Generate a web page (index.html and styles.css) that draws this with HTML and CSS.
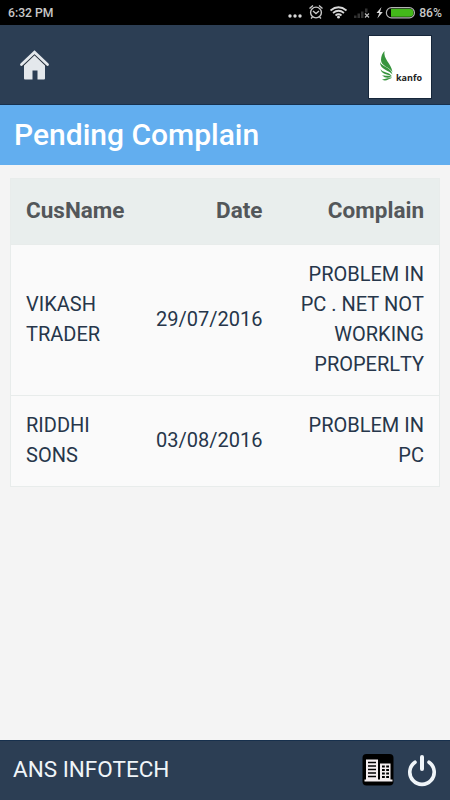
FILE: index.html
```html
<!DOCTYPE html>
<html lang="en">
  <head>
    <meta charset="UTF-8" />
    <meta name="viewport" content="width=device-width, initial-scale=1" />
    <title>Pending Complain</title>
    <link rel="stylesheet" href="styles.css">
  </head>
  <body>
    <!-- Status bar -->
    <div class="status-bar">
      <span class="time">6:32 PM</span>
      <svg class="status-icons" width="130" height="25" viewBox="0 0 130 25">
        <g fill="#d8d8d8">
          <circle cx="5" cy="16" r="1.7" />
          <circle cx="10" cy="16" r="1.7" />
          <circle cx="15" cy="16" r="1.7" />
        </g>
        <!-- Alarm -->
        <g fill="none" stroke="#c8c8c8" stroke-width="1.4">
          <circle cx="31" cy="12.5" r="5.4" />
          <path d="M28 11l3 2.5 3-2.5M24.500 8.500l3.500-3M37.500 8.500l-3.500-3M27.500 17l-1.500 1.500M34.500 17l1.500 1.500" />
        </g>
        <!-- Wifi -->
        <g fill="none" stroke="#d8d8d8" stroke-width="1.7">
          <path d="M45.500 10.500q8-6.500 16 0M48 13q5.500-4.500 11 0M50.500 15.500q3-2.500 6 0" />
        </g>
        <circle cx="53.500" cy="17.200" r="1.400" fill="#d8d8d8" />
        <!-- Signal -->
        <path d="M69 15.500h2.500V18H69zM72.500 13.500H75V18h-2.500zM76 11.500h2.500V18H76zM80 8.500h2.500v4H80z" fill="#333" />
        <path d="M80 13.500l4 4M84 13.500l-4 4" stroke="#bbb" stroke-width="1.200" />
        <!-- Battery -->
        <path d="M96.500 7l-5 6h2.800l-2 5.500 5.500-6.500h-2.800z" fill="#d8d8d8" />
        <rect x="101.400" y="7.600" width="28" height="10.300" rx="5" fill="#000" stroke="#b4b4b4" stroke-width="1.200" />
        <path d="M106 8.800h18.500a4 4 0 0 1 0 8H106z" fill="#43b81a" />
      </svg>
      <span class="battery">86%</span>
    </div>

    <!-- Header -->
    <header>
      <svg class="home" width="32" height="32" viewBox="0 0 32 32">
        <path d="M5 15L15.500 5 26 15v14.500a1 1 0 0 1-1 1h-6.500v-9h-5v9H6a1 1 0 0 1-1-1z" fill="#e4e8ec" />
        <path d="M3 17L15.500 5 28 17" fill="none" stroke="#26303c" stroke-width="2" />
        <path d="M2.500 15.500L15.500 3.200 28.500 15.500" fill="none" stroke="#e4e8ec" stroke-width="2.800" stroke-linecap="round" />
      </svg>
      <div class="logo">
        <svg width="17" height="34" viewBox="0 0 17 34">
          <g fill="#36943c">
            <path d="M5.500 1C4 9 12 13 13.500 22C10 17 2 16 2 10C2 6 3.500 3 5.500 1z" />
            <path d="M1 12c2 5 11 5 12.500 12.500C10 20 1 20 1 12z" />
            <path d="M1.500 19c2 4 9 2.500 11.500 7.500C9 24 2.500 25 1.500 19z" />
            <path d="M3 25c3 1.500 7-.5 10 2.500-3-.3-7 1.500-10-2.500z" />
            <path d="M3 29.500c3 0 5-2 9.500-1.300C9 29 7 32 3 29.500z" />
          </g>
        </svg>
        <span>kanfo</span>
      </div>
    </header>

    <h1>Pending Complain</h1>

    <!-- Complaints -->
    <main>
      <table>
        <thead>
          <tr>
            <th>CusName</th>
            <th>Date</th>
            <th>Complain</th>
          </tr>
        </thead>
        <tbody>
          <tr>
            <td>VIKASH TRADER</td>
            <td>29/07/2016</td>
            <td>PROBLEM IN PC . NET NOT WORKING PROPERLTY</td>
          </tr>
          <tr>
            <td>RIDDHI SONS</td>
            <td>03/08/2016</td>
            <td>PROBLEM IN PC</td>
          </tr>
        </tbody>
      </table>
    </main>

    <!-- Footer -->
    <footer>
      <span class="company">ANS INFOTECH</span>
      <svg class="building" width="32" height="32" viewBox="0 0 32 32">
        <rect x="0.500" width="31" height="31.500" rx="4" fill="#000" />
        <path d="M4 5.500h12V26H4zM18 9.500h10.500V26H18zM2.500 25.500h28v2h-28z" fill="#f4eef0" />
        <path d="M6 8.500h8M6 12h8M6 15.500h8M6 19h8M6 22.500h8" stroke="#000" stroke-width="1.600" />
        <path d="M20 12.500h7M20 16h7M20 19.500h7M20 23h7" stroke="#000" stroke-width="1.800" stroke-dasharray="2.800 1.400" />
      </svg>
      <svg class="power" width="30" height="34" viewBox="0 0 30 34">
        <g fill="none" stroke="#f0f5f9" stroke-linecap="round">
          <path d="M8 8.200A12.200 12.200 0 1 0 22 8.200" stroke-width="3.600" />
          <path d="M15 3v12" stroke-width="4" />
        </g>
      </svg>
    </footer>
  </body>
</html>
```

FILE: styles.css
```css
/* Basic Reset */
* {
  margin: 0;
  padding: 0;
  box-sizing: border-box;
}

body {
  display: flex;
  flex-direction: column;
  height: 100vh;
  font-family: Roboto, Arial, sans-serif;
  background-color: #f4f4f4;
  color: #26364a;
  overflow: hidden;
}

/* Status Bar */
.status-bar {
  display: flex;
  align-items: center;
  height: 25px;
  padding: 0 8px;
  background-color: #000;
  color: #c8c8c8;
  font-size: 12.2px;
  font-weight: 500;
}

.status-icons {
  margin-left: auto;
  margin-right: 4px;
}

/* Header */
header {
  display: flex;
  justify-content: space-between;
  align-items: center;
  height: 80px;
  padding: 5px 18px 0 19px;
  background-color: #2c3e54;
  border-bottom: 1px solid #17304d;
}

.home {
  margin-bottom: 5px;
}

.logo {
  display: flex;
  align-items: center;
  width: 64px;
  height: 64px;
  padding-left: 10px;
  background-color: #fff;
  border: 1px solid #16263a;
  color: #222;
  font-family: "Open Sans", sans-serif;
  font-size: 9px;
  font-weight: 700;
}

.logo span {
  padding-top: 20px;
}

/* Page Title */
h1 {
  height: 60px;
  padding-left: 14px;
  background-color: #62aeef;
  color: #fff;
  font-size: 30px;
  font-weight: 500;
  line-height: 60px;
}

/* Complaints Table */
main {
  flex: 1;
  padding: 13px 10px;
}

table {
  width: 430px;
  border-collapse: collapse;
  table-layout: fixed;
  background-color: #fafafa;
  border: 1px solid #e8eceb;
}

th,
td {
  padding: 15px;
  font-size: 20px;
  line-height: 30px;
  text-align: right;
  vertical-align: middle;
}

th {
  height: 66px;
  padding-bottom: 18px;
  background-color: #e9eeed;
  color: #53575a;
  font-size: 22.5px;
  font-weight: 700;
}

td {
  padding: 14px 15px 16px;
  border-top: 1px solid #e8eceb;
  font-kerning: none;
}

th:first-child,
td:first-child {
  width: 122px;
  text-align: left;
}

th:nth-child(2) {
  width: 145px;
}

/* Footer */
footer {
  display: flex;
  align-items: center;
  height: 60px;
  padding: 0 13px;
  background-color: #2c3e54;
  border-top: 1px solid #17304d;
}

.company {
  flex: 1;
  padding-bottom: 3px;
  color: #f0f5f9;
  font-size: 22.5px;
}

.building {
  margin-bottom: 2px;
}

.power {
  margin-left: 13px;
}
```
